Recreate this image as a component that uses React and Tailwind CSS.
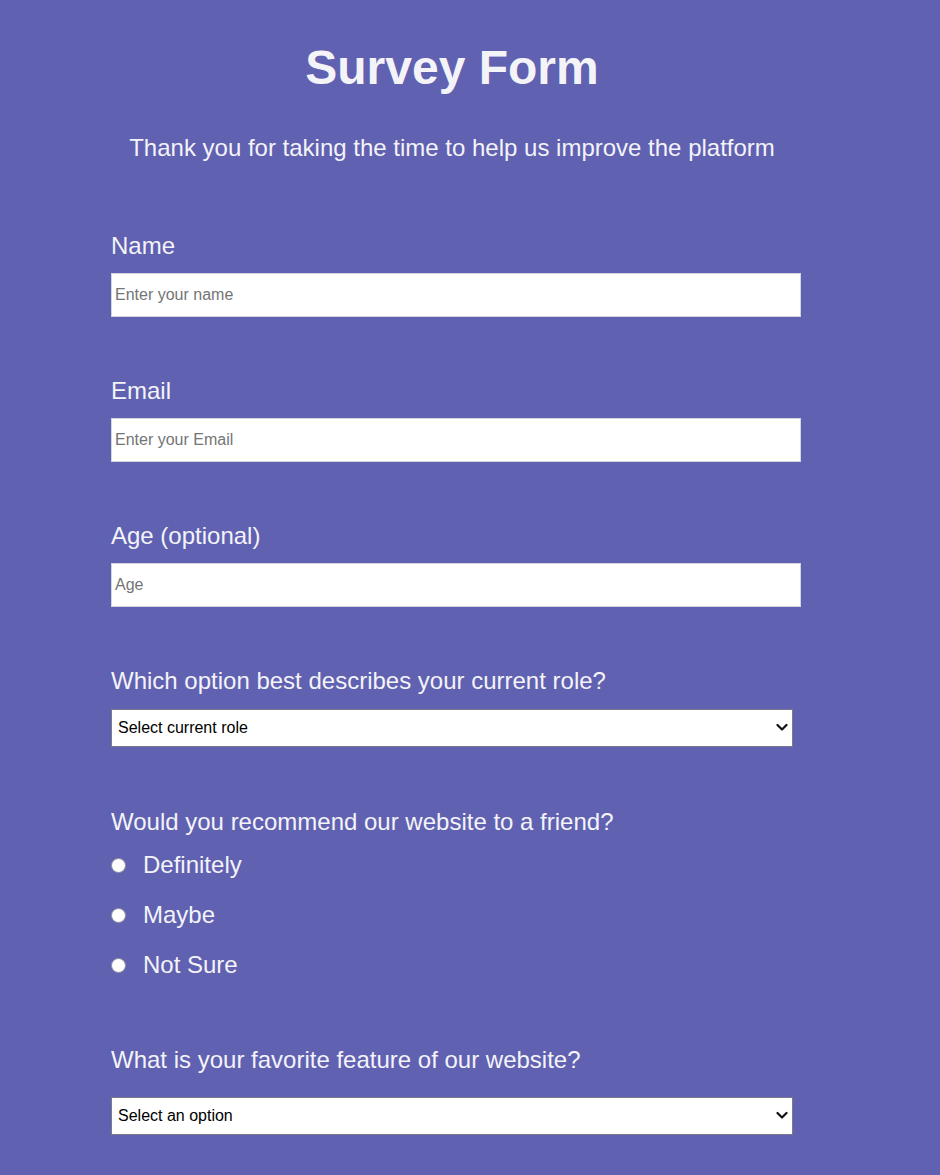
import { useState } from 'react';

const ROLES = ['Student', 'Full-time job', 'Full-time learner', 'Prefer not to say', 'Other'];
const FEATURES = ['Challenges', 'Projects', 'Community', 'Open source'];
const RECOMMEND = ['Definitely', 'Maybe', 'Not Sure'];

function Label({ children, className = '' }) {
  return <label className={`block text-[24px] leading-[28px] ${className}`}>{children}</label>;
}

function TextField({ placeholder, type = 'text' }) {
  return (
    <input
      type={type}
      placeholder={placeholder}
      className="mt-[13px] block w-[690px] h-[44px] bg-white border border-[#d4d4dc] px-[3px] text-[16px] text-black placeholder:text-[#757575] outline-none"
    />
  );
}

function Dropdown({ value, onChange, placeholder, options, className = '' }) {
  return (
    <div className={`relative w-[682px] ${className}`}>
      <select
        value={value}
        onChange={(e) => onChange(e.target.value)}
        className="appearance-none block w-full h-[38px] bg-white border border-[#7a7a8a] pl-[6px] pr-8 text-[16px] text-black outline-none"
      >
        <option value="">{placeholder}</option>
        {options.map((o) => (
          <option key={o} value={o}>{o}</option>
        ))}
      </select>
      {/* chevron */}
      <svg
        className="pointer-events-none absolute right-[5px] top-[14px]"
        width="12"
        height="9"
        viewBox="0 0 12 9"
        fill="none"
      >
        <path d="M1.5 2 L6 6.5 L10.5 2" stroke="#111" strokeWidth="2.2" strokeLinecap="round" strokeLinejoin="round" />
      </svg>
    </div>
  );
}

export default function App() {
  const [role, setRole] = useState('');
  const [feature, setFeature] = useState('');
  const [recommend, setRecommend] = useState(null);

  return (
    <div className="min-h-screen bg-[#6061b1] text-[#f3f3f8] font-['Liberation_Sans',Arial,sans-serif]">
      <form className="w-[690px] ml-[111px] pt-[40px] pb-[40px]" onSubmit={(e) => e.preventDefault()}>
        <header className="pr-2 text-center">
          <h1 className="text-[48px] font-bold leading-[55px]">Survey Form</h1>
          <p className="mt-[39px] text-[24px] leading-[28px]">
            Thank you for taking the time to help us improve the platform
          </p>
        </header>

        <div className="mt-[70px]">
          <Label>Name</Label>
          <TextField placeholder="Enter your name" />
        </div>

        <div className="mt-[60px]">
          <Label>Email</Label>
          <TextField type="email" placeholder="Enter your Email" />
        </div>

        <div className="mt-[60px]">
          <Label>Age (optional)</Label>
          <TextField type="number" placeholder="Age" />
        </div>

        <div className="mt-[60px]">
          <Label>Which option best describes your current role?</Label>
          <Dropdown
            className="mt-[14px]"
            value={role}
            onChange={setRole}
            placeholder="Select current role"
            options={ROLES}
          />
        </div>

        <div className="mt-[61px]">
          <Label>Would you recommend our website to a friend?</Label>
          <div className="mt-[15px] flex flex-col gap-[22px]">
            {RECOMMEND.map((r) => (
              <label key={r} className="flex items-center text-[24px] leading-[28px] cursor-pointer">
                <input
                  type="radio"
                  name="recommend"
                  checked={recommend === r}
                  onChange={() => setRecommend(r)}
                  className="appearance-none w-[15px] h-[15px] rounded-full bg-white border border-[#8d8d99] checked:border-[5px] checked:border-[#1a73e8]"
                />
                <span className="ml-[17px]">{r}</span>
              </label>
            ))}
          </div>
        </div>

        <div className="mt-[67px]">
          <Label>What is your favorite feature of our website?</Label>
          <Dropdown
            className="mt-[23px]"
            value={feature}
            onChange={setFeature}
            placeholder="Select an option"
            options={FEATURES}
          />
        </div>
      </form>
    </div>
  );
}
